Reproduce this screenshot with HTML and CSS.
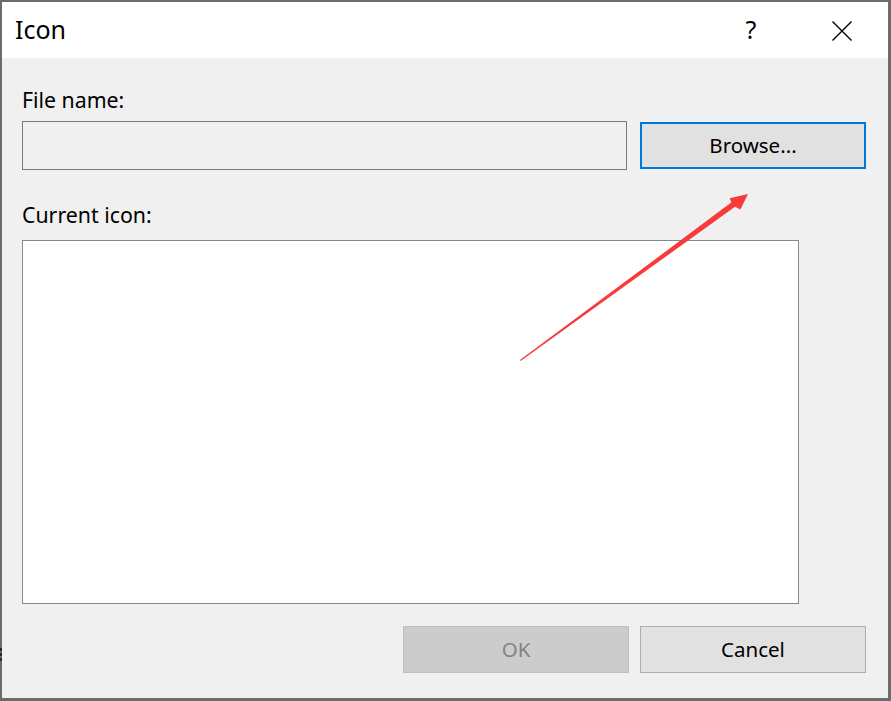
FILE: index.html
```html
<!DOCTYPE html>
<html>
<head>
<meta charset="utf-8">
<link rel="stylesheet" href="styles.css">
</head>
<body>
<div class="window">
  <div class="titlebar">
    <div class="title">Icon</div>
    <div class="caption-btn help">?</div>
    <div class="caption-btn close">
      <svg width="20" height="20" viewBox="0 0 20 20"><path d="M0.5 0.5 L19.5 19.5 M19.5 0.5 L0.5 19.5" stroke="#000" stroke-width="1.4" fill="none"/></svg>
    </div>
  </div>
  <div class="content">
    <div class="label label-file">File name:</div>
    <div class="file-row">
      <div class="input"></div>
      <div class="btn btn-browse">Browse...</div>
    </div>
    <div class="label label-icon">Current icon:</div>
    <div class="listbox"></div>
    <div class="footer">
      <div class="btn btn-disabled">OK</div>
      <div class="btn">Cancel</div>
    </div>
  </div>
  <div class="edge-mark"></div>
</div>
<svg class="arrow" width="891" height="701" viewBox="0 0 891 701">
  <polygon points="520,360.6 520.6,359.6 731.2,202.6 729.8,198.2 748,194 740.4,209.6 735,206.8 521,360.8" fill="#f93a3a"/>
</svg>
</body>
</html>
```
FILE: styles.css
```css
html, body {
  margin: 0;
  padding: 0;
}
body {
  width: 891px;
  height: 701px;
  overflow: hidden;
  position: relative;
  font-family: "Noto Sans", "Open Sans", sans-serif;
  color: #000;
}
.window {
  width: 891px;
  height: 701px;
  box-sizing: border-box;
  border-style: solid;
  border-color: #6b6b6b;
  border-width: 2px 3px 3px 2px;
  background: #f0f0f0;
  display: flex;
  flex-direction: column;
  position: relative;
}
.titlebar {
  height: 56px;
  background: #fff;
  display: flex;
  align-items: center;
  flex: none;
}
.title {
  flex: 1;
  padding-left: 13px;
  font-size: 25px;
  line-height: 56px;
  margin-top: -2px;
}
.caption-btn {
  height: 56px;
  display: flex;
  align-items: center;
  justify-content: center;
}
.help {
  width: 90px;
  font-size: 25px;
  margin-top: -2px;
}
.close {
  width: 92px;
  padding-top: 1px;
  box-sizing: border-box;
}
.content {
  flex: 1;
  padding: 0 22px 0 20px;
  display: flex;
  flex-direction: column;
}
.label {
  font-size: 21.3px;
  line-height: 28px;
  height: 28px;
}
.label-file {
  margin-top: 28px;
  margin-bottom: 7px;
}
.file-row {
  display: flex;
  align-items: center;
  gap: 13px;
  height: 49px;
}
.input {
  width: 605px;
  height: 49px;
  box-sizing: border-box;
  border: 1px solid #7a7a7a;
  background: #f0f0f0;
}
.btn {
  width: 226px;
  height: 47px;
  box-sizing: border-box;
  border: 1px solid #adadad;
  background: #e1e1e1;
  display: flex;
  align-items: center;
  justify-content: center;
  font-size: 20.5px;
  padding-bottom: 1px;
}
.btn-browse {
  border: 2px solid #0078d7;
}
.label-icon {
  margin-top: 31px;
  margin-bottom: 11px;
}
.listbox {
  width: 777px;
  height: 364px;
  box-sizing: border-box;
  border: 1px solid #828790;
  background: #fff;
}
.footer {
  display: flex;
  justify-content: flex-end;
  gap: 11px;
  margin-top: 22px;
}
.btn-disabled {
  background: #cccccc;
  border-color: #bfbfbf;
  color: #838383;
}
.edge-mark {
  position: absolute;
  left: -2px;
  top: 646px;
  width: 2px;
  height: 14px;
  background: repeating-linear-gradient(#2a2a2a 0 3px, #6b6b6b 3px 5px);
}
.arrow {
  position: absolute;
  left: 0;
  top: 0;
  pointer-events: none;
}
```
